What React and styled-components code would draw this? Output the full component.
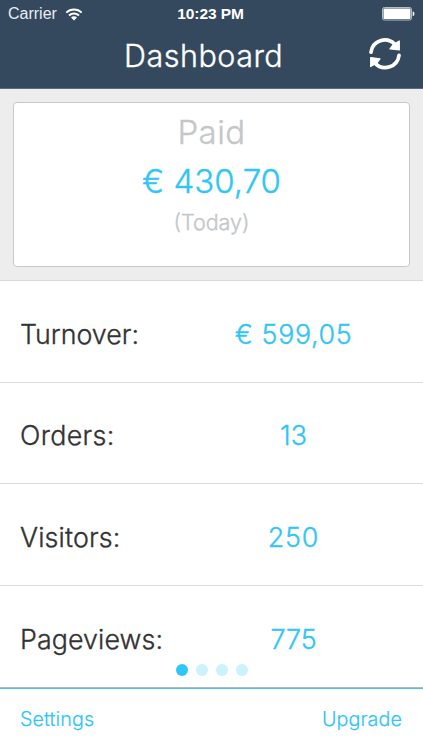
import styled, { createGlobalStyle } from "styled-components";

const stats = [
  { label: "Turnover:", value: "€ 599,05", labelTrack: 0, valueTrack: 0.65 },
  { label: "Orders:", value: "13", labelTrack: 0.35, valueTrack: 0 },
  { label: "Visitors:", value: "250", labelTrack: 0.15, valueTrack: 0.8 },
  { label: "Pageviews:", value: "775", labelTrack: 0.1, valueTrack: 0 },
];

export default function App() {
  return (
    <Screen>
      <GlobalStyle />
      <Header>
        <StatusBar>
          <Carrier>
            Carrier
            <WifiIcon />
          </Carrier>
          <Clock>10:23 PM</Clock>
          <BatteryIcon />
        </StatusBar>
        <TitleBar>
          <Title>Dashboard</Title>
          <RefreshButton aria-label="Refresh">
            <RefreshIcon />
          </RefreshButton>
        </TitleBar>
      </Header>
      <Summary>
        <Card>
          <CardTitle>Paid</CardTitle>
          <CardAmount>€ 430,70</CardAmount>
          <CardPeriod>(Today)</CardPeriod>
        </Card>
      </Summary>
      <StatList>
        {stats.map((stat) => (
          <StatRow key={stat.label}>
            <StatLabel $track={stat.labelTrack}>{stat.label}</StatLabel>
            <StatValue $track={stat.valueTrack}>{stat.value}</StatValue>
          </StatRow>
        ))}
        <Pager>
          <Dot $active />
          <Dot />
          <Dot />
          <Dot />
        </Pager>
      </StatList>
      <Footer>
        <FooterButton>Settings</FooterButton>
        <FooterButton>Upgrade</FooterButton>
      </Footer>
    </Screen>
  );
}

function WifiIcon() {
  return (
    <svg width="18" height="13" viewBox="0 0 18 13" fill="none" stroke="#fff" strokeWidth="1.9">
      <path d="M1.3 4.6C5.6.5 12.4.5 16.7 4.6" />
      <path d="M4 7.5c2.8-2.6 7.2-2.6 10 0" />
      <path d="M6 9.4c1.7-1.6 4.3-1.6 6 0L9 12.4z" fill="#fff" stroke="none" />
    </svg>
  );
}

function BatteryIcon() {
  return (
    <svg width="33" height="14" viewBox="0 0 33 14">
      <rect x="0.5" y="0.5" width="29" height="12.5" rx="1.8" fill="none" stroke="#b3bdc7" />
      <rect x="1.5" y="1.5" width="27" height="10.5" rx="0.8" fill="#fff" />
      <path d="M30.7 4.4c2.4.5 2.4 4 0 4.6z" fill="#fff" />
    </svg>
  );
}

function RefreshIcon() {
  return (
    <svg width="34" height="34" viewBox="0 0 34 34" fill="none" stroke="#fff" strokeWidth="3.7" strokeLinecap="round">
      <path d="M3 15.2A14 14 0 0 1 26.6 7" />
      <path d="M31 18.4A14 14 0 0 1 7.4 26.6" />
      <path d="M31.3 4v9l-9.3-1.2 3.2-4.3z" fill="#fff" strokeWidth="1.2" strokeLinejoin="round" />
      <path d="M2.7 29.6v-9l9.3 1.2-3.2 4.3z" fill="#fff" strokeWidth="1.2" strokeLinejoin="round" />
    </svg>
  );
}

const GlobalStyle = createGlobalStyle`
body {
  margin: 0;
  background-color: #ffffff;
}
button {
  border: none;
  padding: 0;
  background: none;
  font-family: inherit;
  cursor: pointer;
}
h1, h2, p {
  margin: 0;
  font-weight: inherit;
}`

const Screen = styled.div`
width: 423px;
height: 750px;
display: flex;
flex-direction: column;
overflow: hidden;
color: #333333;
font-family: Inter, "Open Sans", sans-serif;
font-weight: 300;
-webkit-text-stroke-width: 0.35px;`

const Header = styled.header`
height: 89px;
box-sizing: border-box;
background-color: #34495e;
border-bottom: 1px solid #5d6c7d;
color: #ffffff;`

const StatusBar = styled.div`
height: 28px;
padding: 0 8px;
display: grid;
grid-template-columns: 1fr auto 1fr;
align-items: center;
box-sizing: border-box;
font: 16px/28px "Liberation Sans", sans-serif;
-webkit-text-stroke-width: 0;
> svg {
  justify-self: end;
}`

const Carrier = styled.div`
display: flex;
align-items: center;
gap: 8px;
color: #e9edf1;`

const Clock = styled.div`
font-size: 15.5px;
font-weight: 700;
letter-spacing: -0.1px;
transform: translateX(-1px);`

const TitleBar = styled.div`
height: 60px;
padding: 0 21px 0 124px;
display: flex;
justify-content: space-between;
align-items: start;`

const Title = styled.h1`
font-size: 30.5px;
line-height: 55px;
letter-spacing: 0.5px;`

const RefreshButton = styled.button`
height: 34px;
margin-top: 9px;
svg {
  display: block;
}`

const Summary = styled.section`
height: 192px;
padding: 13px 13px 13px;
box-sizing: border-box;
background-color: #ededed;
border-bottom: 1px solid #d9dadc;`

const Card = styled.div`
height: 165px;
padding-top: 5px;
box-sizing: border-box;
display: flex;
flex-direction: column;
align-items: center;
background-color: #ffffff;
border: 1px solid #c6c8ca;
border-radius: 4px;
color: #c4c7c9;`

const CardTitle = styled.h2`
font-size: 33px;
line-height: 49px;
letter-spacing: 0.4px;`

const CardAmount = styled.p`
font-size: 33px;
line-height: 48px;
color: #30c5f7;`

const CardPeriod = styled.p`
font-size: 21.5px;
line-height: 34px;`

const StatList = styled.main`
position: relative;
height: 406px;
display: grid;
grid-template-rows: repeat(4, 1fr);`

const StatRow = styled.div`
padding: 5px 0 0 20px;
display: grid;
grid-template-columns: 144px 1fr;
align-items: center;
box-sizing: border-box;
border-bottom: 1px solid #dcdcdc;
&:nth-child(4) {
  border-bottom: none;
}`

const StatLabel = styled.div`
font-size: 26.8px;
line-height: 40px;
white-space: nowrap;
letter-spacing: ${(props) => props.$track}px;`

const StatValue = styled.div`
font-size: 26.8px;
line-height: 40px;
text-align: center;
color: #30c5f7;
letter-spacing: ${(props) => props.$track}px;`

const Pager = styled.div`
position: absolute;
bottom: 11px;
left: 0;
right: 0;
display: flex;
justify-content: center;
gap: 8px;`

const Dot = styled.span`
width: 12px;
height: 12px;
border-radius: 50%;
background-color: ${(props) => (props.$active ? "#2fc7fa" : "#ccf2fe")};`

const Footer = styled.footer`
flex: 1;
padding: 0 21px 0 20px;
display: flex;
justify-content: space-between;
align-items: center;
border-top: 1px solid #b5b9bc;
box-shadow: inset 0 1px 0 #45c3ea;`

const FooterButton = styled.button`
font-size: 19.7px;
font-weight: inherit;
line-height: 28px;
letter-spacing: 0.1px;
-webkit-text-stroke-width: 0.2px;
color: #30c5f7;`
